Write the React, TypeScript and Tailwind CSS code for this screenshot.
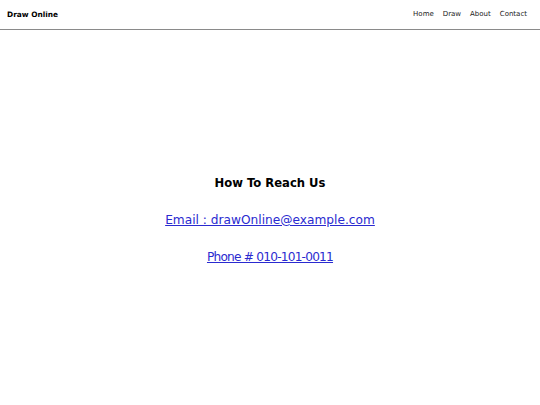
export default function App() {
  return (
    <div className="h-[405px] flex flex-col bg-white" style={{ fontFamily: '"DejaVu Sans", sans-serif' }}>
      <header className="h-[30px] flex items-center justify-between px-[7px] border-b border-[#8a8a8a] shrink-0">
        <div className="text-[7.4px] font-semibold text-black">Draw Online</div>
        <nav className="flex gap-[9px] text-[7px] text-[#222] pr-[6px]">
          <a>Home</a>
          <a>Draw</a>
          <a>About</a>
          <a>Contact</a>
        </nav>
      </header>
      <main className="flex-1 flex flex-col items-center justify-center pt-[6px]">
        <h1 className="text-[11.6px] font-bold text-black mb-[19px]">How To Reach Us</h1>
        <a href="#" className="text-[12.2px] text-[#2a2ad0] underline mb-[19px]">Email : drawOnline@example.com</a>
        <a href="#" className="text-[12.2px] text-[#2a2ad0] underline tracking-[-0.8px]">Phone # 010-101-0011</a>
      </main>
    </div>
  );
}
